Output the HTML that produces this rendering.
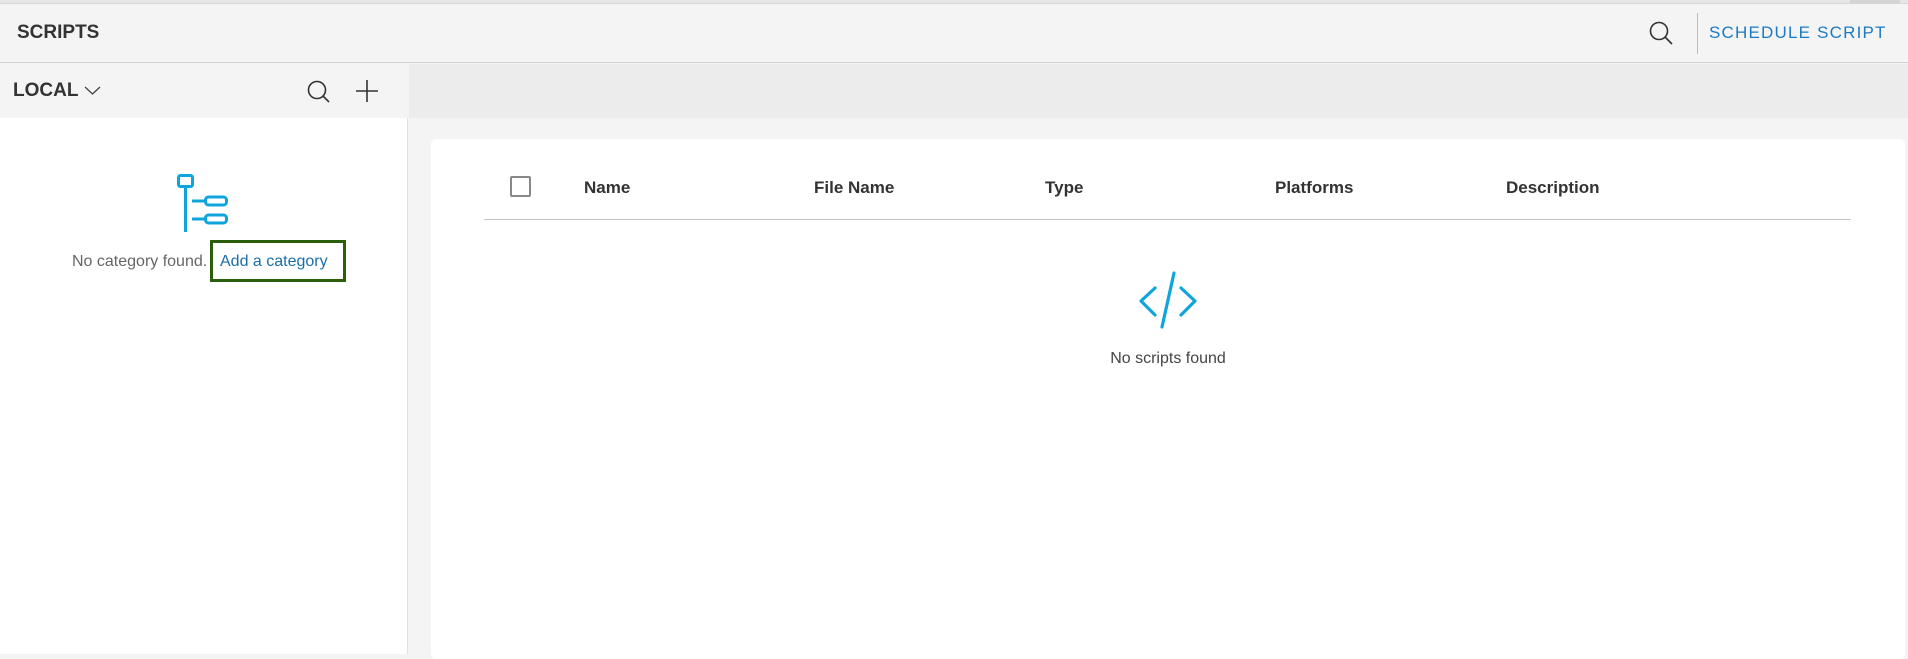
<!DOCTYPE html>
<html><head><meta charset="utf-8"><style>
*{margin:0;padding:0;box-sizing:border-box}
body{width:1908px;height:654px;overflow:hidden;background:#f4f4f4;font-family:"Liberation Sans",sans-serif;position:relative;color:#333}
.abs{position:absolute}
</style></head><body>
<div class="abs" style="left:0;top:0;width:1908px;height:4px;background:#e6e6e6;border-bottom:1px solid #d8d8d8"></div>
<div class="abs" style="left:1850px;top:0;width:50px;height:4px;background:#d4d4d4"></div>
<div class="abs" style="left:0;top:4px;width:1908px;height:59px;background:#f4f4f4;border-bottom:1px solid #d2d2d2"></div>
<div class="abs" style="left:17px;top:22px;font-size:19px;font-weight:bold;color:#333">SCRIPTS</div>
<svg class="abs" style="left:1648px;top:20px" width="28" height="26" viewBox="0 0 28 26"><circle cx="11" cy="11" r="8.5" fill="none" stroke="#333" stroke-width="1.6"/><line x1="17" y1="17" x2="24" y2="24" stroke="#333" stroke-width="1.6"/></svg>
<div class="abs" style="left:1697px;top:13px;width:1px;height:41px;background:#bbb"></div>
<div class="abs" style="left:1709px;top:23px;font-size:17px;color:#1a7bc4;letter-spacing:1.2px;white-space:nowrap">SCHEDULE SCRIPT</div>
<!-- sidebar -->
<div class="abs" style="left:0;top:64px;width:408px;height:590px;background:#fff;border-right:1px solid #e0e0e0"></div>
<div class="abs" style="left:0;top:64px;width:408px;height:54px;background:#f4f4f4"></div>
<div class="abs" style="left:13px;top:80px;font-size:19px;font-weight:bold;color:#333">LOCAL</div>
<svg class="abs" style="left:84px;top:84px" width="18" height="14"><polyline points="1,3 8.5,10 16,3" fill="none" stroke="#444" stroke-width="1.3"/></svg>
<svg class="abs" style="left:306px;top:79px" width="26" height="25" viewBox="0 0 26 25"><circle cx="11" cy="11" r="8.5" fill="none" stroke="#333" stroke-width="1.6"/><line x1="17" y1="17" x2="23" y2="23" stroke="#333" stroke-width="1.6"/></svg>
<svg class="abs" style="left:356px;top:80px" width="22" height="22"><line x1="11" y1="0" x2="11" y2="22" stroke="#333" stroke-width="1.6"/><line x1="0" y1="11" x2="22" y2="11" stroke="#333" stroke-width="1.6"/></svg>
<svg class="abs" style="left:175px;top:172px" width="56" height="62" viewBox="0 0 56 62">
<rect x="3.5" y="3.5" width="14" height="11" rx="2" fill="none" stroke="#0ea5dd" stroke-width="3"/>
<line x1="10.5" y1="15" x2="10.5" y2="60" stroke="#0ea5dd" stroke-width="3"/>
<line x1="17" y1="29" x2="30" y2="29" stroke="#0ea5dd" stroke-width="3"/>
<rect x="30.5" y="25" width="21" height="8" rx="3" fill="none" stroke="#0ea5dd" stroke-width="3"/>
<line x1="17" y1="47" x2="30" y2="47" stroke="#0ea5dd" stroke-width="3"/>
<rect x="30.5" y="43" width="21" height="8" rx="3" fill="none" stroke="#0ea5dd" stroke-width="3"/>
</svg>
<div class="abs" style="left:72px;top:253px;font-size:16px;color:#666;white-space:nowrap">No category found.</div>
<div class="abs" style="left:210px;top:240px;width:136px;height:42px;border:3px solid #2a5e0a"></div>
<div class="abs" style="left:220px;top:253px;font-size:16px;color:#1a6ea8;white-space:nowrap">Add a category</div>
<!-- main -->
<div class="abs" style="left:409px;top:64px;width:1499px;height:54px;background:#ececec"></div>
<div class="abs" style="left:431px;top:139px;width:1474px;height:520px;background:#fff;border-radius:5px"></div>
<div class="abs" style="left:510px;top:176px;width:21px;height:21px;border:2px solid #888;border-radius:2px"></div>
<div class="abs" style="top:178px;left:0;font-size:17px;font-weight:bold;color:#333;white-space:nowrap">
<span class="abs" style="left:584px">Name</span><span class="abs" style="left:814px">File Name</span><span class="abs" style="left:1045px">Type</span><span class="abs" style="left:1275px">Platforms</span><span class="abs" style="left:1506px">Description</span></div>
<div class="abs" style="left:484px;top:219px;width:1367px;height:1px;background:#c4c4c4"></div>
<svg class="abs" style="left:1137px;top:270px" width="62" height="62" viewBox="1137 270 62 62">
<polyline points="1155,288 1141,301 1155,315" fill="none" stroke="#0ea5dd" stroke-width="3.2" stroke-linecap="round" stroke-linejoin="round"/>
<polyline points="1181,288 1195,301 1181,315" fill="none" stroke="#0ea5dd" stroke-width="3.2" stroke-linecap="round" stroke-linejoin="round"/>
<line x1="1174" y1="273" x2="1162" y2="327" stroke="#0ea5dd" stroke-width="3.2" stroke-linecap="round"/>
</svg>
<div class="abs" style="left:1068px;top:350px;width:200px;text-align:center;font-size:16px;color:#444">No scripts found</div>
</body></html>
